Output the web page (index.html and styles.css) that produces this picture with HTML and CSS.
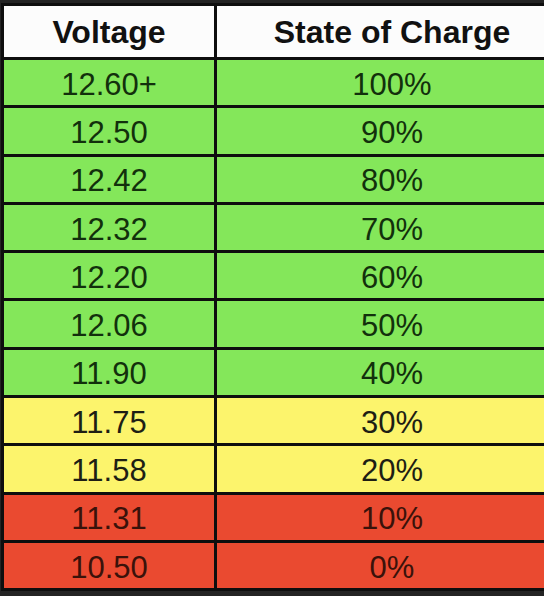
FILE: index.html
```html
<!DOCTYPE html>
<html lang="en">
<head>
  <meta charset="UTF-8" />
  <meta name="viewport" content="width=device-width, initial-scale=1.0"/>
  <title>Battery Voltage Chart</title>
  <link rel="stylesheet" href="styles.css">
</head>
<body>

  <div class="chart">
    <div class="row head">
      <div class="cell">Voltage</div>
      <div class="cell">State of Charge</div>
    </div>

    <!-- good charge -->
    <div class="row green"><div class="cell">12.60+</div><div class="cell">100%</div></div>
    <div class="row green"><div class="cell">12.50</div><div class="cell">90%</div></div>
    <div class="row green"><div class="cell">12.42</div><div class="cell">80%</div></div>
    <div class="row green"><div class="cell">12.32</div><div class="cell">70%</div></div>
    <div class="row green"><div class="cell">12.20</div><div class="cell">60%</div></div>
    <div class="row green"><div class="cell">12.06</div><div class="cell">50%</div></div>
    <div class="row green"><div class="cell">11.90</div><div class="cell">40%</div></div>

    <!-- getting low -->
    <div class="row yellow"><div class="cell">11.75</div><div class="cell">30%</div></div>
    <div class="row yellow"><div class="cell">11.58</div><div class="cell">20%</div></div>

    <!-- flat -->
    <div class="row red"><div class="cell">11.31</div><div class="cell">10%</div></div>
    <div class="row red"><div class="cell">10.50</div><div class="cell">0%</div></div>
  </div>

</body>
</html>
```

FILE: styles.css
```css
body {
  margin: 0;
  background: #242424;
  font-family: "Liberation Sans", Arial, sans-serif;
  overflow: hidden;
}
.chart {
  width: 566px;
  margin: 3px 0 0 1px;
  border: 3px solid #0e0e0e;
  border-right: none;
}
.row {
  display: grid;
  grid-template-columns: 210px 353px;
  height: 45.3px;
  border-top: 3px solid #0e0e0e;
}
.cell {
  display: flex;
  align-items: center;
  justify-content: center;
  font-size: 31px;
  padding-top: 4px;
}
.cell + .cell {
  border-left: 3px solid #0e0e0e;
}
.row.head {
  height: 51px;
  border-top: none;
  background: #fcfcfc;
  color: #111;
  font-weight: bold;
}
.head .cell {
  font-size: 32px;
  padding-top: 2px;
}
.green {
  background: #84e75a;
  color: #12300c;
}
.yellow {
  background: #fcf46c;
  color: #1e1e14;
}
.red {
  background: #ea4a30;
  color: #3a120a;
}
```
